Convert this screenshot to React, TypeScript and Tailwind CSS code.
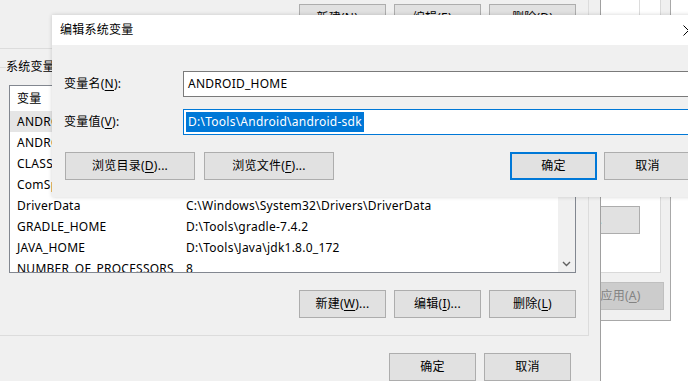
import React from "react";

function U({ children }: { children: React.ReactNode }) {
  return <span className="underline underline-offset-2">{children}</span>;
}

function Btn({
  children,
  className = "",
}: {
  children: React.ReactNode;
  className?: string;
}) {
  return (
    <div
      className={
        "flex h-[28px] shrink-0 items-center justify-center whitespace-nowrap border border-[#adadad] bg-[#e1e1e1] " +
        className
      }
    >
      {children}
    </div>
  );
}

const rows: { name: string; value: string }[] = [
  { name: "ANDROID_HOME", value: "" },
  { name: "ANDROID_SDK_HOME", value: "" },
  { name: "CLASSPATH", value: "" },
  { name: "ComSpec", value: "" },
  { name: "DriverData", value: "C:\\Windows\\System32\\Drivers\\DriverData" },
  { name: "GRADLE_HOME", value: "D:\\Tools\\gradle-7.4.2" },
  { name: "JAVA_HOME", value: "D:\\Tools\\Java\\jdk1.8.0_172" },
  { name: "NUMBER_OF_PROCESSORS", value: "8" },
];

function SysPropsWindow() {
  return (
    <div className="absolute left-[380px] top-[-40px] flex h-[361px] w-[291px] flex-col border-b border-r border-[#a8a8a8] bg-[#f0f0f0] pt-[10px] pb-[10px]">
      <div className="mr-[9px] flex h-[303px] flex-col border-b border-r border-[#d9d9d9] bg-white">
        <div className="mr-[20px] h-[220px] border-b border-r border-[#dcdcdc]" />
        <div className="mt-[16px] flex justify-end pr-[20px]">
          <Btn className="w-[150px] !justify-end pr-[37px]">
            环境变量(<U>N</U>)...
          </Btn>
        </div>
      </div>
      <div className="mt-[9px] flex justify-end pr-[6px]">
        <Btn className="w-[87px] !border-[#bfbfbf] !bg-[#cccccc] text-[#838383]">
          应用(<U>A</U>)
        </Btn>
      </div>
    </div>
  );
}

function EnvDialog() {
  return (
    <div className="absolute left-0 top-0 flex h-[381px] w-[601px] flex-col border-r border-[#a0a0a0] bg-[#f0f0f0]">
      {/* user variables group (bottom part) */}
      <div className="flex h-[50px] w-[589px] justify-end gap-[8px] border-b border-r border-[#dcdcdc] pr-[12px] pt-[4px]">
        <Btn className="w-[87px]">
          新建(<U>N</U>)...
        </Btn>
        <Btn className="w-[87px]">
          编辑(<U>E</U>)...
        </Btn>
        <Btn className="w-[87px]">
          删除(<U>D</U>)
        </Btn>
      </div>

      {/* system variables group */}
      <div className="relative ml-[-2px] mt-[18px] flex w-[591px] flex-col border border-[#dcdcdc] pb-[17px]">
        <div className="absolute left-[7px] top-[-10px] bg-[#f0f0f0] pr-[2px] leading-[18px]">
          系统变量(<U>S</U>)
        </div>
        <div className="ml-[10px] mt-[17px] flex h-[188px] w-[567px] border border-[#828790] bg-white">
          <div className="flex min-w-0 flex-1 flex-col overflow-hidden">
            <div className="flex h-[25px] shrink-0 items-center">
              <div className="w-[169px] pl-[7px]">变量</div>
              <div className="pl-[7px]">值</div>
            </div>
            {rows.map((r, i) => (
              <div
                key={r.name}
                className={
                  "flex h-[21px] shrink-0 items-center whitespace-nowrap " +
                  (i === 0 ? "bg-[#e5e5e5]" : "")
                }
              >
                <div className="w-[169px] shrink-0 overflow-hidden pl-[7px]">
                  {r.name}
                </div>
                <div className="pl-[7px]">{r.value}</div>
              </div>
            ))}
          </div>
          <div className="flex w-[17px] shrink-0 flex-col justify-end bg-[#f0f0f0]">
            <div className="flex h-[17px] items-center justify-center">
              <svg width="9" height="6" viewBox="0 0 9 6">
                <path
                  d="M1 1 L4.5 4.5 L8 1"
                  fill="none"
                  stroke="#606060"
                  strokeWidth="1.4"
                />
              </svg>
            </div>
          </div>
        </div>
        <div className="mt-[17px] flex justify-end gap-[8px] pr-[12px]">
          <Btn className="w-[87px]">
            新建(<U>W</U>)...
          </Btn>
          <Btn className="w-[87px]">
            编辑(<U>I</U>)...
          </Btn>
          <Btn className="w-[87px]">
            删除(<U>L</U>)
          </Btn>
        </div>
      </div>

      <div className="mt-[17px] flex justify-end gap-[8px] pr-[29px]">
        <Btn className="w-[87px]">确定</Btn>
        <Btn className="w-[87px]">取消</Btn>
      </div>
    </div>
  );
}

function EditDialog() {
  return (
    <div className="absolute left-[52px] top-[15px] flex h-[182px] w-[659px] flex-col bg-[#f0f0f0] shadow-[0_0_4px_rgba(0,0,0,0.18)]">
      <div className="flex h-[30px] shrink-0 items-center justify-between bg-white pl-[8px]">
        <div>编辑系统变量</div>
        <div className="flex h-[30px] w-[45px] items-center justify-center">
          <svg width="11" height="11" viewBox="0 0 11 11">
            <path
              d="M0.5 0.5 L10.5 10.5 M10.5 0.5 L0.5 10.5"
              stroke="#000"
              strokeWidth="1"
              fill="none"
            />
          </svg>
        </div>
      </div>
      <div className="flex flex-col pr-[12px]">
        <div className="mt-[26px] flex items-center">
          <div className="w-[131px] shrink-0 pl-[12px]">
            变量名(<U>N</U>):
          </div>
          <div className="flex h-[26px] flex-1 items-center border border-[#7a7a7a] bg-white pl-[4px]">
            ANDROID_HOME
          </div>
        </div>
        <div className="mt-[12px] flex items-center">
          <div className="w-[131px] shrink-0 pl-[12px]">
            变量值(<U>V</U>):
          </div>
          <div className="flex h-[26px] flex-1 items-center border border-[#0078d7] bg-white pl-[2px]">
            <span className="bg-[#0078d7] px-[2px] leading-[20px] text-white">
              D:\Tools\Android\android-sdk
            </span>
          </div>
        </div>
        <div className="mt-[17px] flex pl-[13px]">
          <Btn className="w-[130px]">
            浏览目录(<U>D</U>)...
          </Btn>
          <Btn className="ml-[9px] w-[130px]">
            浏览文件(<U>F</U>)...
          </Btn>
          <Btn className="ml-[176px] w-[87px] !border-2 !border-[#0078d7]">
            确定
          </Btn>
          <Btn className="ml-[7px] w-[87px]">取消</Btn>
        </div>
      </div>
    </div>
  );
}

export default function App() {
  return (
    <div className="relative h-[381px] w-[688px] overflow-hidden bg-white font-['Noto_Sans','Noto_Sans_CJK_SC',sans-serif] text-[12px] leading-[16px] tracking-[0.25px] text-black">
      <SysPropsWindow />
      <EnvDialog />
      <EditDialog />
    </div>
  );
}
